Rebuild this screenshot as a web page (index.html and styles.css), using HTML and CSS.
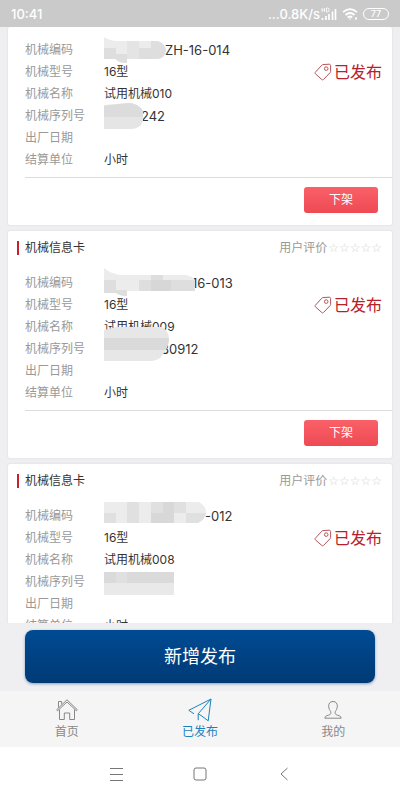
FILE: index.html
```html
<!DOCTYPE html>
<html lang="zh-CN">
<head>
<meta charset="utf-8">
<meta name="viewport" content="width=device-width, initial-scale=1">
<title>已发布</title>
<link rel="stylesheet" href="styles.css">
</head>
<body>
<svg width="0" height="0" class="defs" aria-hidden="true">
  <symbol id="tag" viewBox="0 0 18 18">
    <path d="M1.400 9.200 7.800 2.200q.5-.5 1.200-.6L15 1.200c.9-.1 1.600.4 1.600 1.300V8.400q0 .7-.5 1.200L9.600 16.400c-.6.6-1.300.6-1.900 0L1.400 10.800c-.5-.5-.5-1.100 0-1.600z"/>
    <circle cx="12.200" cy="5.600" r="1.800"/>
  </symbol>
</svg>
<div class="app">
  <header class="status">
    <span class="clock">10:41</span>
    <span class="speed">...0.8K/s</span>
    <svg class="signal" viewBox="0 0 16 14"><path d="M1 1v4M3.500 1v4M1 3h2.500M5.500 1v4h1.500l1-1V2L7 1z" stroke-width=".8"/><path d="M1.500 11v2M5 9v4M8 7v6M11.500 4.500V13M14.500 2v11" stroke-width="1.700"/></svg>
    <svg class="wifi" viewBox="0 0 16 14"><path d="M1 5.200q7-6 14 0M3.500 8q4.500-4 9 0M5.800 10.500q2.200-2 4.400 0" stroke-width="1.700"/><path d="M8 11.500v1M13 11.500h2" stroke-width="1.800"/></svg>
    <span class="battery">77</span>
  </header>

  <main class="list">
    <article class="card card-continued">
      <div class="body">
        <dl class="info">
          <dt>机械编码</dt>
          <dd class="code code-a"><svg class="mosaic" viewBox="0 0 62 26"><path fill="#ececec" d="M0 0q4 3 12 4h42q8 4 8 9t-8 9H23v4q-9 0-12-4H0z"/><path fill="#dedede" d="M0 11h12v11H0zM12 17h11v9q-8 0-11-4zM35 11h12v11H35zM47 4h7q7 3 8 9-1 9-9 9h-6z"/><path fill="#e4e4e4" d="M23 4h12v18H23z"/></svg>ZH-16-014</dd>
          <dt>机械型号</dt><dd>16型</dd>
          <dt>机械名称</dt><dd>试用机械010</dd>
          <dt>机械序列号</dt>
          <dd class="code serial-a"><svg class="mosaic" viewBox="0 0 40 26"><path fill="#e5e5e5" d="M0 2 24 0q10 0 15 8v10q-3 8-12 8H0z"/><path fill="#dcdcdc" d="M0 3 24 0q10 0 15 8v6H0z"/></svg>242</dd>
          <dt>出厂日期</dt><dd></dd>
          <dt>结算单位</dt><dd>小时</dd>
        </dl>
        <p class="state"><svg><use href="#tag"/></svg>已发布</p>
      </div>
      <footer class="actions"><button type="button" class="off">下架</button></footer>
    </article>

    <article class="card">
      <header class="head"><h2>机械信息卡</h2><span class="rate">用户评价</span><span class="stars">☆☆☆☆☆</span></header>
      <div class="body">
        <dl class="info">
          <dt>机械编码</dt>
          <dd class="code code-b"><svg class="mosaic" viewBox="0 0 91 28"><path fill="#ececec" d="M0 0q5 5 16 7h65q8 1 10 5v11H23v5q-9 0-12-5H0z"/><path fill="#dedede" d="M0 12h12v13H0zM12 22h11v6q-8 0-11-3zM35 12h12v11H35zM47 7h12v16H47zM59 12h32v11H59z"/><path fill="#d7d7d7" d="M47 12h20v11H47z"/></svg>16-013</dd>
          <dt>机械型号</dt><dd>16型</dd>
          <dt>机械名称</dt><dd>试用机械009</dd>
          <dt>机械序列号</dt>
          <dd class="code serial-b"><svg class="mosaic" viewBox="0 0 65 36"><path fill="#e7e7e7" d="M0 4 12 1h46q7 4 7 12t-8 18q-4 4-11 4H0z"/><path fill="#dadada" d="M0 12h65q0 7-4 12H0z"/></svg>80912</dd>
          <dt>出厂日期</dt><dd></dd>
          <dt>结算单位</dt><dd>小时</dd>
        </dl>
        <p class="state"><svg><use href="#tag"/></svg>已发布</p>
      </div>
      <footer class="actions"><button type="button" class="off">下架</button></footer>
    </article>

    <article class="card">
      <header class="head"><h2>机械信息卡</h2><span class="rate">用户评价</span><span class="stars">☆☆☆☆☆</span></header>
      <div class="body">
        <dl class="info">
          <dt>机械编码</dt>
          <dd class="code code-c"><svg class="mosaic" viewBox="0 0 102 21"><path fill="#ececec" d="M0 0h95q7 4 7 10t-8 11H0z"/><path fill="#e0e0e0" d="M0 11h12v10H0zM23 0h12v21H23zM47 0h12v21H47zM70 0h12v11H70zM82 11h20q-1 7-8 10H82z"/><path fill="#d8d8d8" d="M59 0h11v11H59zM47 11h23v10H47z"/></svg>-012</dd>
          <dt>机械型号</dt><dd>16型</dd>
          <dt>机械名称</dt><dd>试用机械008</dd>
          <dt>机械序列号</dt>
          <dd class="code serial-c"><svg class="mosaic" viewBox="0 0 70 23"><path fill="#e9e9e9" d="M0 0h70v23H0z"/><path fill="#dadada" d="M0 0h12v11H0zM23 0h47v11H23z"/><path fill="#e0e0e0" d="M12 0h11v11H12z"/></svg></dd>
          <dt>出厂日期</dt><dd></dd>
          <dt>结算单位</dt><dd>小时</dd>
        </dl>
        <p class="state"><svg><use href="#tag"/></svg>已发布</p>
      </div>
      <footer class="actions"><button type="button" class="off">下架</button></footer>
    </article>
  </main>

  <div class="publish"><button type="button">新增发布</button></div>

  <nav class="tabs">
    <a href="#home"><svg viewBox="0 0 24 24"><path d="M2.500 12.800 12 4l9.500 8.800M2.500 12.800 1.800 11.600 12 1.800l10.200 9.800-.7 1.200M4.500 11.500V21.500h4.800V15h5.400v6.500h4.800v-10M3.500 9.500v-6h3.200v3"/></svg>首页</a>
    <a href="#published" class="current"><svg viewBox="0 0 24 24"><path d="M23 1 .8 12.300l5.200 3.500M23 1l-2.800 21.800-7.200-5.300M23 1 10.200 15.800v6.400M10.200 15.800l2.800 1.700"/></svg>已发布</a>
    <a href="#me"><svg viewBox="0 0 24 24"><path d="M12 3.500c-3.200 0-4.500 2.200-4.300 5 .1 2.500 1.100 3.600 1.900 4.800.6 1.100.4 2.700-.7 3.400-1.700.9-4.900.6-5.100 3.500h16.400c-.2-2.900-3.400-2.600-5.100-3.500-1.100-.7-1.300-2.300-.7-3.400.8-1.200 1.800-2.300 1.900-4.800.2-2.800-1.100-5-4.300-5z"/></svg>我的</a>
  </nav>

  <div class="system">
    <button type="button" aria-label="菜单"><svg viewBox="0 0 16 16"><path d="M2 2.500h13M2 8.500h13M2 14.500h13"/></svg></button>
    <button type="button" aria-label="主屏幕"><svg viewBox="0 0 16 16"><rect x="2" y="2" width="12" height="12" rx="2"/></svg></button>
    <button type="button" aria-label="返回"><svg viewBox="0 0 16 16"><path d="M11.500 2 5 8l6.500 6"/></svg></button>
  </div>
</div>
</body>
</html>
```
FILE: styles.css
```css
* { box-sizing: border-box; margin: 0; padding: 0; }

body {
  background: #efeff2;
  color: #333;
  font: 12px/22px Inter, "Noto Sans CJK SC", sans-serif;
}

button { border: 0; font: inherit; }
svg { fill: none; flex: none; }
.defs { position: absolute; }

.app { display: flex; flex-direction: column; height: 100vh; }

.status {
  display: flex;
  flex: none;
  align-items: center;
  height: 27px;
  padding: 0 11px;
  gap: 5px;
  background: #cacaca;
  color: #fff;
  font-size: 13px;
  font-weight: 500;
}
.status svg { width: 16px; height: 14px; stroke: #fff; }
.speed { margin-left: auto; }
.status .signal { margin-left: -4px; }
.battery {
  width: 26px;
  border: 1px solid #fff;
  border-radius: 6px;
  font-size: 9px;
  line-height: 10px;
  text-align: center;
}

.list {
  display: flex;
  flex: 1;
  flex-direction: column;
  gap: 6px;
  min-height: 0;
  padding: 0 8px;
  overflow: hidden;
}

.card {
  flex: none;
  background: #fff;
  border-radius: 2px;
  box-shadow: 0 0 2px #d4d4d8;
}
.card-continued { padding-top: 11px; }

.head {
  display: flex;
  align-items: center;
  height: 34px;
  margin-bottom: 6px;
  padding: 0 10px 0 9px;
  color: #999;
}
.head h2 {
  margin-right: auto;
  padding-left: 6px;
  border-left: 2px solid #c8202f;
  color: #333;
  font-size: 12px;
  font-weight: 400;
  line-height: 14px;
}
.stars { color: #d4d4d4; font: 12px/22px "DejaVu Sans", sans-serif; }
.rate { margin-right: 1px; }

.body {
  display: flex;
  justify-content: space-between;
  margin-left: 17px;
  padding: 1px 10px 6px 0;
  border-bottom: 1px solid #dcdcdf;
}
.info { display: grid; grid-template-columns: 79px auto; grid-auto-rows: 22px; }
.info dt { color: #999; }
.info dd { position: relative; white-space: nowrap; }
.info .code { font-size: 13px; }

.mosaic { position: absolute; left: 0; bottom: -2px; }
.code-a { padding-left: 61px; }
.serial-a { padding-left: 37px; }
.code-b { padding-left: 88px; }
.serial-b { padding-left: 57px; }
.code-c { padding-left: 101px; }
.code-a .mosaic { width: 62px; height: 26px; }
.serial-a .mosaic { width: 40px; height: 26px; }
.code-b .mosaic { width: 91px; height: 28px; }
.serial-b .mosaic { width: 65px; height: 36px; }
.code-c .mosaic { bottom: 4px; width: 102px; height: 21px; }
.serial-c .mosaic { width: 70px; height: 23px; }

.state {
  display: flex;
  align-items: center;
  height: 22px;
  margin-top: 22px;
  gap: 2px;
  color: #b8202b;
  font-size: 16px;
}
.state svg { width: 18px; height: 18px; stroke: #b5545a; }

.actions { display: flex; justify-content: flex-end; padding: 9px 14px 12px; }
.off {
  width: 74px;
  height: 26px;
  border-radius: 3px;
  background: linear-gradient(#fa6068, #ee4a54);
  color: #fff;
}

.publish { flex: none; padding: 7px 25px 8px; }
.publish button {
  display: block;
  width: 100%;
  height: 53px;
  border-radius: 8px;
  background: linear-gradient(#004b93, #003a75);
  box-shadow: 0 1px 3px #7f9dc0;
  color: #fff;
  font-size: 18px;
}

.tabs {
  display: grid;
  flex: none;
  grid-template-columns: repeat(3, 1fr);
  height: 56px;
  background: #f5f5f5;
}
.tabs a {
  display: flex;
  flex-direction: column;
  align-items: center;
  padding-top: 7px;
  color: #888;
  line-height: 20px;
  text-decoration: none;
}
.tabs svg { width: 24px; height: 24px; stroke: currentColor; }
.tabs .current { color: #1b82bd; }

.system {
  display: flex;
  flex: none;
  justify-content: center;
  height: 53px;
  gap: 68px;
  background: #fff;
}
.system button { display: flex; align-items: center; background: none; }
.system svg { width: 16px; height: 16px; stroke: #777; }
```
